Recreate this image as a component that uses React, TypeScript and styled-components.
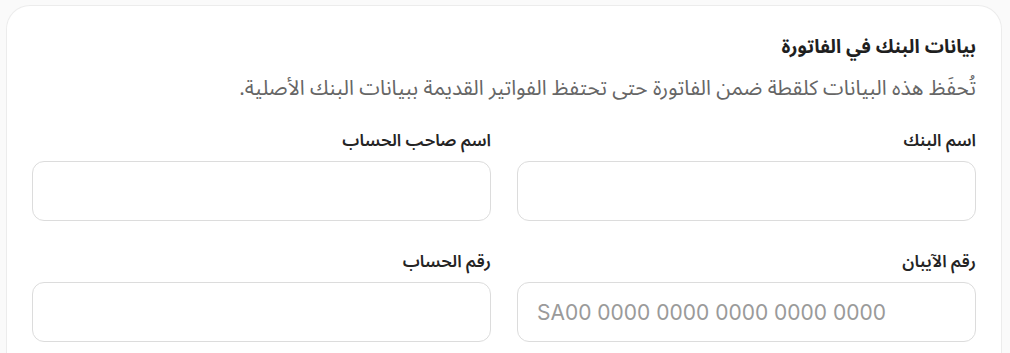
import React from "react";
import styled, { createGlobalStyle } from "styled-components";

const Global = createGlobalStyle`
  html, body { margin: 0; padding: 0; background: #fafafa; }
  body { font-family: "Noto Sans Arabic", "Noto Sans", "DejaVu Sans", sans-serif; }
  * { box-sizing: border-box; }
`;

const Page = styled.div`
  padding: 5px 8px 0 6px;
`;

const Card = styled.section`
  direction: rtl;
  background: #ffffff;
  border: 1px solid #ececec;
  border-bottom: none;
  border-radius: 24px 24px 0 0;
  padding: 26px 25px 24px;
  min-height: 360px;
`;

const Title = styled.h2`
  margin: 0;
  font-size: 19px;
  font-weight: 700;
  color: #1f1f1f;
  line-height: 30px;
`;

const Subtitle = styled.p`
  margin: 11px 0 0;
  font-size: 20.8px;
  font-weight: 400;
  color: #666666;
  line-height: 30px;
`;

const Grid = styled.div`
  display: grid;
  grid-template-columns: 1fr 1fr;
  column-gap: 26px;
  row-gap: 28px;
  margin-top: 25px;
`;

const Field = styled.label`
  display: flex;
  flex-direction: column;
  gap: 7px;
`;

const LabelText = styled.span`
  font-size: 17px;
  font-weight: 600;
  color: #242424;
  line-height: 26px;
`;

const Input = styled.input<{ $ltr?: boolean }>`
  height: 60px;
  width: 100%;
  border: 1px solid #dcdcdc;
  border-radius: 12px;
  background: #fff;
  padding: 0 19px;
  font-family: Inter, "Noto Sans", sans-serif;
  font-size: 21px;
  color: #222;
  direction: ${(p) => (p.$ltr ? "ltr" : "rtl")};
  outline: none;
  &::placeholder { color: #9a9a9a; }
`;

const fields = [
  { label: "اسم البنك" },
  { label: "اسم صاحب الحساب" },
  { label: "رقم الآيبان", placeholder: "SA00 0000 0000 0000 0000 0000", ltr: true },
  { label: "رقم الحساب" },
];

export default function App() {
  return (
    <>
      <Global />
      <Page>
        <Card>
          <Title>بيانات البنك في الفاتورة</Title>
          <Subtitle>تُحفَظ هذه البيانات كلقطة ضمن الفاتورة حتى تحتفظ الفواتير القديمة ببيانات البنك الأصلية.</Subtitle>
          <Grid>
            {fields.map((f) => (
              <Field key={f.label}>
                <LabelText>{f.label}</LabelText>
                <Input $ltr={f.ltr} placeholder={f.placeholder} />
              </Field>
            ))}
          </Grid>
        </Card>
      </Page>
    </>
  );
}
